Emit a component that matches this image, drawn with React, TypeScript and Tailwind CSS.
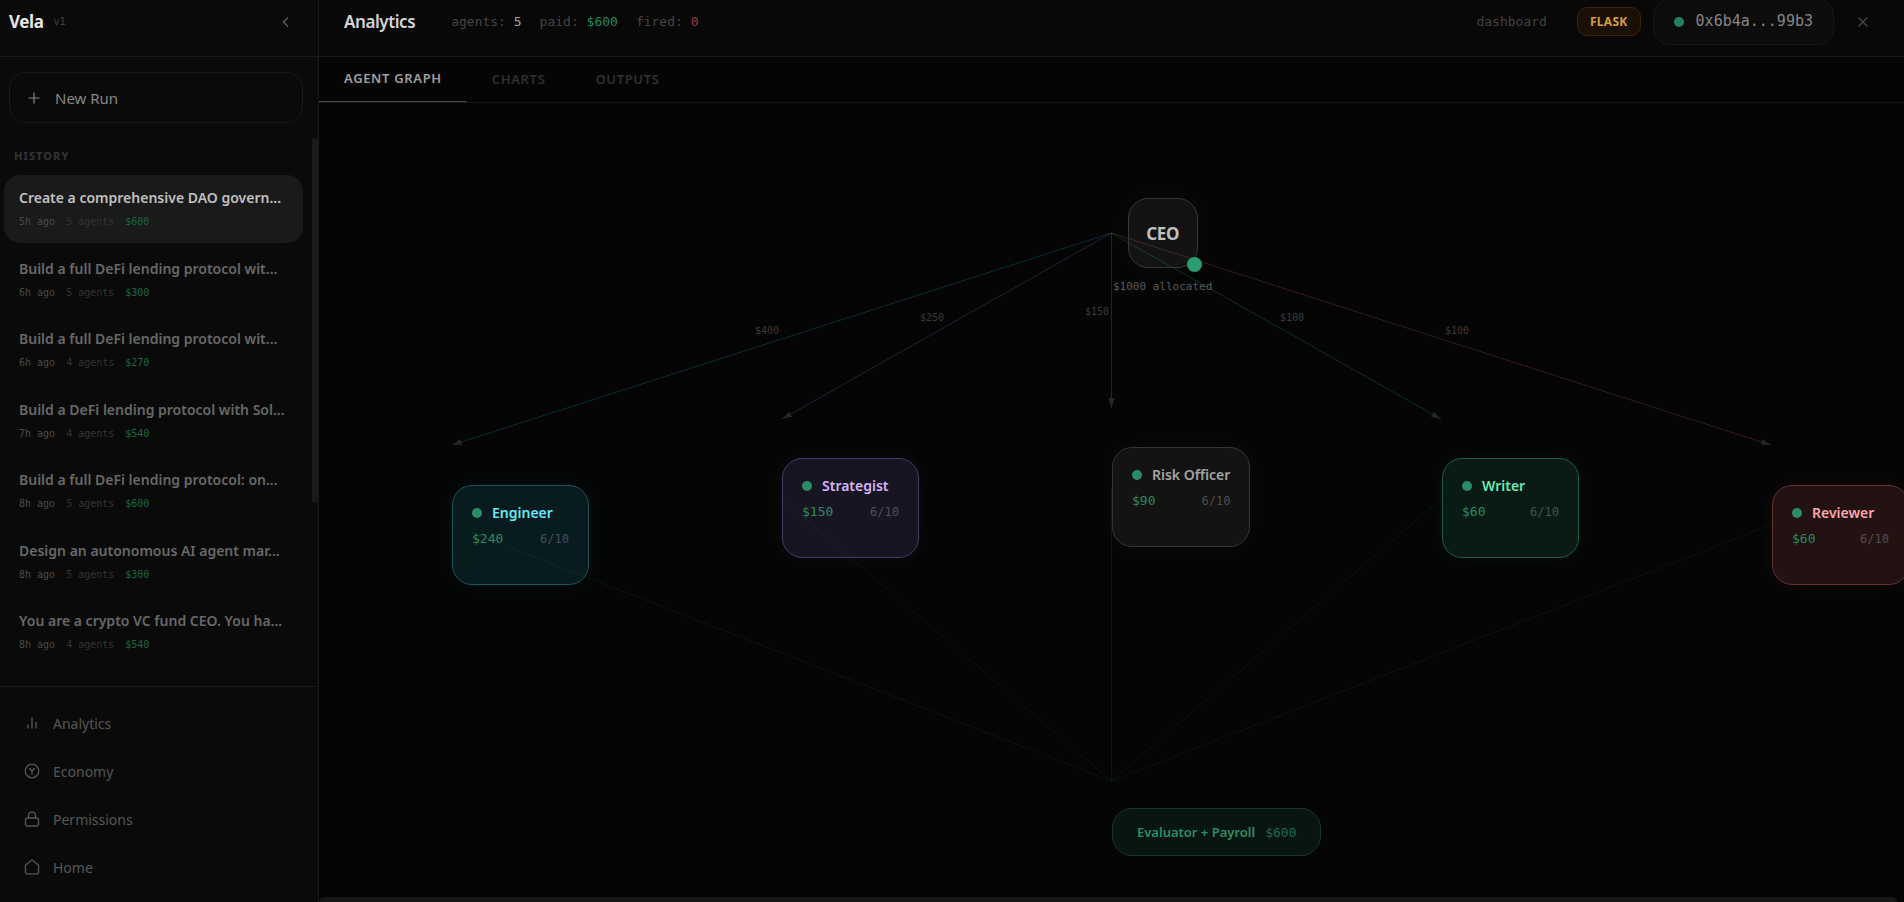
import React from "react";

interface Run {
  id: number;
  title: string;
  age: string;
  agents: number;
  paid: string;
}

interface Agent {
  name: string;
  x: number;
  y: number;
  budget: string;
  paid: string;
  score: string;
  card: string;
  text: string;
  stroke: string;
  labelX: number;
  labelY: number;
}

const runs: Run[] = [
  { id: 1, title: "Create a comprehensive DAO govern...", age: "5h ago", agents: 5, paid: "$600" },
  { id: 2, title: "Build a full DeFi lending protocol wit...", age: "6h ago", agents: 5, paid: "$300" },
  { id: 3, title: "Build a full DeFi lending protocol wit...", age: "6h ago", agents: 4, paid: "$270" },
  { id: 4, title: "Build a DeFi lending protocol with Sol...", age: "7h ago", agents: 4, paid: "$540" },
  { id: 5, title: "Build a full DeFi lending protocol: on...", age: "8h ago", agents: 5, paid: "$600" },
  { id: 6, title: "Design an autonomous AI agent mar...", age: "8h ago", agents: 5, paid: "$300" },
  { id: 7, title: "You are a crypto VC fund CEO. You ha...", age: "8h ago", agents: 4, paid: "$540" },
];

// x and y are the tip of the incoming edge, in canvas pixels
const agents: Agent[] = [
  {
    name: "Engineer",
    x: 133,
    y: 342,
    budget: "$400",
    paid: "$240",
    score: "6/10",
    card: "left-[133px] top-[382px] border-[#1c5560] bg-[#22d3ee]/11 shadow-[0_0_24px_rgba(34,211,238,0.06)]",
    text: "text-[#67e8f9]",
    stroke: "#22d3ee",
    labelX: 448,
    labelY: 231,
  },
  {
    name: "Strategist",
    x: 463,
    y: 316,
    budget: "$250",
    paid: "$150",
    score: "6/10",
    card: "left-[463px] top-[355px] border-[#443c66] bg-[#a78bfa]/12 shadow-[0_0_24px_rgba(167,139,250,0.06)]",
    text: "text-[#d4b4fb]",
    stroke: "#a78bfa",
    labelX: 613,
    labelY: 218,
  },
  {
    name: "Risk Officer",
    x: 792.5,
    y: 305,
    budget: "$150",
    paid: "$90",
    score: "6/10",
    card: "left-[793px] top-[344px] border-[#353535] bg-white/6 shadow-[0_0_24px_rgba(255,255,255,0.03)]",
    text: "text-[#a3a3a3]",
    stroke: "#a3a3a3",
    labelX: 778,
    labelY: 212,
  },
  {
    name: "Writer",
    x: 1122,
    y: 316,
    budget: "$100",
    paid: "$60",
    score: "6/10",
    card: "left-[1123px] top-[355px] border-[#1c5c45] bg-[#34d399]/11 shadow-[0_0_24px_rgba(52,211,153,0.06)]",
    text: "text-[#6ee7b7]",
    stroke: "#34d399",
    labelX: 973,
    labelY: 218,
  },
  {
    name: "Reviewer",
    x: 1452,
    y: 342,
    budget: "$100",
    paid: "$60",
    score: "6/10",
    card: "left-[1453px] top-[382px] border-[#6a3036] bg-[#f87171]/12 shadow-[0_0_24px_rgba(248,113,113,0.06)]",
    text: "text-[#fda4af]",
    stroke: "#fb7185",
    labelX: 1138,
    labelY: 231,
  },
];

const navIcon = {
  width: 16,
  height: 16,
  viewBox: "0 0 16 16",
  fill: "none",
  stroke: "currentColor",
  strokeWidth: 1.3,
  strokeLinecap: "round" as const,
  strokeLinejoin: "round" as const,
};

const links = [
  {
    name: "Analytics",
    icon: (
      <svg {...navIcon}>
        <path d="M4 13V10M8 13V3M12 13V7.500" />
      </svg>
    ),
  },
  {
    name: "Economy",
    icon: (
      <svg {...navIcon}>
        <circle cx="8" cy="8" r="6.800" />
        <path d="M5.500 5.500L8 8L10.500 5.500M8 8V11" />
      </svg>
    ),
  },
  {
    name: "Permissions",
    icon: (
      <svg {...navIcon}>
        <rect x="1.500" y="7" width="13" height="8" rx="1.500" />
        <path d="M4.500 7V4.500a3.500 3.500 0 0 1 7 0V7" />
      </svg>
    ),
  },
  {
    name: "Home",
    icon: (
      <svg {...navIcon}>
        <path d="M1.500 6L8 1L14.500 6V13.500a1.300 1.300 0 0 1-1.300 1.300H2.800a1.300 1.300 0 0 1-1.300-1.300Z" />
      </svg>
    ),
  },
];

const mono = "font-['DejaVu_Sans_Mono',monospace]";

const HistoryItem = ({ run, active }: { run: Run; active: boolean }) => {
  return (
    <li>
      <button
        className={`flex h-[68px] w-full flex-col justify-center rounded-2xl pl-[15px] text-left ${
          active ? "bg-[#1a1a1a] text-[#c0c0c0]" : "text-[#686868]"
        }`}
      >
        <span className="text-[14px] leading-[22px] font-semibold whitespace-nowrap">{run.title}</span>
        <span className={`mt-1 flex gap-[11px] text-[10px] leading-[18px] ${mono}`}>
          <span className="text-[#4a4a4a]">{run.age}</span>
          <span className="text-[#343434]">{run.agents} agents</span>
          <span className="text-[#1f6447]">{run.paid}</span>
        </span>
      </button>
    </li>
  );
};

const Sidebar = () => {
  return (
    <aside className="flex w-[319px] shrink-0 flex-col border-r border-[#1a1a1a] bg-[#0a0a0a]">
      <div className="flex h-[57px] shrink-0 items-center justify-between border-b border-[#1a1a1a] pr-5 pb-3 pl-[9px]">
        <div className="flex items-center gap-2.5">
          <span className="text-[17px] font-bold tracking-tight text-[#e8e8e8]">Vela</span>
          <span className={`pb-0.5 text-[10px] text-[#404040] ${mono}`}>v1</span>
        </div>
        <button aria-label="Collapse sidebar" className="p-1 text-[#5a5a5a]">
          <svg width="16" height="16" viewBox="0 0 16 16" fill="none" stroke="currentColor" strokeWidth="1.500">
            <path d="M10 3.500L5.500 8L10 12.500" />
          </svg>
        </button>
      </div>

      <div className="pt-[15px] pr-[15px] pl-[9px]">
        <button className="flex h-[51px] w-full items-center gap-[15px] rounded-2xl border border-[#191919] pl-[18px] text-[15px] text-[#868686]">
          <svg width="12" height="12" viewBox="0 0 12 12" fill="none" stroke="currentColor" strokeWidth="1.200">
            <path d="M6 0.500V11.500M0.500 6H11.500" />
          </svg>
          <span className="pt-0.5">New Run</span>
        </button>
      </div>

      <div className="mt-[15px] flex min-h-0 flex-1">
        <div className="flex flex-1 flex-col pr-[9px] pb-5 pl-1">
          <h2 className="px-2.5 pt-2.5 pb-[11px] text-[11px] leading-4 font-bold tracking-widest text-[#353535]">
            HISTORY
          </h2>
          <ul className="flex flex-1 flex-col justify-between">
            {runs.map((run) => (
              <HistoryItem key={run.id} run={run} active={run.id === 1} />
            ))}
          </ul>
        </div>
        <div className="w-1.5">
          <div className="h-2/3 rounded-full bg-[#1a1a1a]" />
        </div>
      </div>

      <nav className="flex flex-col border-t border-[#1a1a1a] pt-3 pb-[11px]">
        {links.map((link) => (
          <a key={link.name} href="#" className="flex h-12 items-center gap-[13px] pl-6 text-[14px] text-[#565656]">
            {link.icon}
            {link.name}
          </a>
        ))}
      </nav>
    </aside>
  );
};

const Header = () => {
  return (
    <header className="flex h-[57px] shrink-0 items-center justify-between border-b border-[#1a1a1a] bg-[#080808] pr-[35px] pb-[13px] pl-[25px]">
      <div className="flex items-center">
        <h1 className="mr-9 text-[17px] font-semibold tracking-tight text-[#d4d4d4]">Analytics</h1>
        <div className={`flex gap-[18px] text-[13px] text-[#454545] ${mono}`}>
          <span>
            agents: <span className="text-[#a3a3a3]">5</span>
          </span>
          <span>
            paid: <span className="text-[#23875d]">$600</span>
          </span>
          <span>
            fired: <span className="text-[#9a3c3c]">0</span>
          </span>
        </div>
      </div>
      <div className="flex items-center">
        <a href="#" className={`mr-[30px] text-[13px] text-[#424242] ${mono}`}>
          dashboard
        </a>
        <span className="mr-3 flex h-[29px] items-center rounded-[10px] border border-[#3d2508] bg-[#1a1006] px-3 text-[12px] font-bold tracking-wide text-[#d99a45]">
          FLASK
        </span>
        <button
          className={`flex h-[46px] items-center gap-3 rounded-2xl border border-[#181818] bg-[#0c0c0c] px-5 text-[15px] text-[#868686] ${mono}`}
        >
          <span className="size-2.5 rounded-full bg-[#257f5e]" />
          0x6b4a...99b3
        </button>
        <button aria-label="Close" className="ml-[23px] text-[#484848]">
          <svg width="12" height="12" viewBox="0 0 12 12" fill="none" stroke="currentColor" strokeWidth="1.300">
            <path d="M1.500 1.500L10.500 10.500M10.500 1.500L1.500 10.500" />
          </svg>
        </button>
      </div>
    </header>
  );
};

const AgentCard = ({ agent }: { agent: Agent }) => {
  return (
    <div className={`absolute h-[100px] min-w-[137px] rounded-[20px] border px-[19px] pt-4 ${agent.card}`}>
      <div className="flex items-center gap-2.5">
        <span className="size-2.5 rounded-full bg-[#2b8a68]" />
        <span className={`text-[14px] leading-[22px] font-semibold whitespace-nowrap ${agent.text}`}>{agent.name}</span>
      </div>
      <div className={`mt-1 flex items-center justify-between leading-[22px] ${mono}`}>
        <span className="text-[13px] text-[#2b8a63]">{agent.paid}</span>
        <span className="text-[12px] text-white/25">{agent.score}</span>
      </div>
    </div>
  );
};

const AgentGraph = () => {
  return (
    <div className="relative min-h-0 flex-1 overflow-hidden">
      <svg className="absolute top-0 left-0" width="1600" height="794" fill="none">
        <defs>
          <marker id="arrow" markerWidth="10" markerHeight="6" refX="10" refY="3" orient="auto" markerUnits="userSpaceOnUse">
            <path d="M0 0L10 3L0 6Z" fill="#262626" />
          </marker>
        </defs>
        {agents.map((agent) => (
          <g key={agent.name}>
            <line
              x1="792.5"
              y1="130"
              x2={agent.x}
              y2={agent.y}
              stroke={agent.stroke}
              strokeOpacity="0.2"
              markerEnd="url(#arrow)"
            />
            <line x1={agent.x} y1={agent.y + 80} x2="792.5" y2="678" stroke="#34d399" strokeOpacity="0.08" />
            <text
              x={agent.labelX}
              y={agent.labelY}
              textAnchor="middle"
              fill="#3a3a3a"
              className={`text-[10px] ${mono}`}
            >
              {agent.budget}
            </text>
          </g>
        ))}
      </svg>

      <div className="absolute top-[95px] left-[792px] flex flex-col items-center px-0.5">
        <div className="relative flex size-[70px] items-center justify-center rounded-[20px] border border-[#383838] bg-white/6 pt-px text-[17px] font-bold tracking-tight text-[#c0c0c0] shadow-[0_0_30px_rgba(255,255,255,0.03)]">
          CEO
          <span className="absolute -right-[5px] -bottom-[5px] size-[15px] rounded-full bg-[#2a9d72]" />
        </div>
        <span className={`mt-[9px] text-[11px] leading-5 whitespace-nowrap text-[#5a5a5a] ${mono}`}>$1000 allocated</span>
      </div>

      {agents.map((agent) => (
        <AgentCard key={agent.name} agent={agent} />
      ))}

      <div className="absolute top-[705px] left-[793px] flex h-12 items-center gap-2.5 rounded-[20px] border border-[#15382b] bg-[#34d399]/8 px-6 pt-0.5 whitespace-nowrap">
        <span className="text-[13px] font-semibold text-[#2c8e66]">Evaluator + Payroll</span>
        <span className={`text-[13px] text-[#226a4d] ${mono}`}>$600</span>
      </div>
    </div>
  );
};

const App = () => {
  return (
    <div className="flex h-screen overflow-hidden bg-[#050505] font-['Noto_Sans',sans-serif]">
      <Sidebar />
      <main className="flex min-w-0 flex-1 flex-col">
        <Header />
        <div className="flex h-[46px] shrink-0 border-b border-[#151515] text-[13px] font-semibold tracking-wider">
          <button className="border-b border-[#4a4a4a] px-[25px] text-[#a0a0a0]">AGENT GRAPH</button>
          <button className="px-[25px] text-[#303030]">CHARTS</button>
          <button className="px-[25px] text-[#303030]">OUTPUTS</button>
        </div>
        <AgentGraph />
        <div className="mr-[7px] h-[5px] shrink-0 rounded-t-full bg-[#171717]" />
      </main>
    </div>
  );
};

export default App;
